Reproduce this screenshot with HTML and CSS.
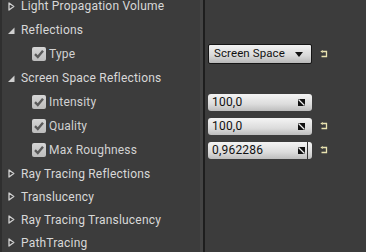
FILE: index.html
```html
<!DOCTYPE html>
<html>
<head>
<meta charset="utf-8">
<link rel="stylesheet" href="styles.css">
</head>
<body>
<div class="panel">
  <div class="row cat"><div class="name"><svg class="arrow" viewBox="0 0 7 9" width="7" height="9"><path d="M1 1 L5.8 4.5 L1 8 Z" fill="none" stroke="#d0d0d0" stroke-width="1.3" stroke-linejoin="round"/></svg>Light Propagation Volume</div><div class="val"></div></div>
  <div class="row cat"><div class="name"><svg class="arrow" viewBox="0 0 7 9" width="7" height="9"><path d="M6.5 1.5 V8 H0 Z" fill="#d0d0d0"/></svg>Reflections</div><div class="val"></div></div>
  <div class="row prop"><div class="name"><span class="check"><svg viewBox="0 0 14 14" width="14" height="14"><path d="M3 7.2 L5.8 10 L11 3.8" fill="none" stroke="#5a5a5a" stroke-width="2.4"/></svg></span>Type</div>
    <div class="val"><div class="combo"><span>Screen Space</span><svg class="drop" viewBox="0 0 8 5" width="8" height="5"><path d="M0 0 H8 L4 5 Z" fill="#111"/></svg></div><svg class="reset" viewBox="0 0 8 8" width="8" height="8"><path d="M2.5 1.5 H6.5 V6.5 H1.5" fill="none" stroke="#e8e2b0" stroke-width="1.3"/><path d="M0.3 1.5 L2.8 0 V3 Z" fill="#e8e2b0"/></svg></div></div>
  <div class="row cat"><div class="name"><svg class="arrow" viewBox="0 0 7 9" width="7" height="9"><path d="M6.5 1.5 V8 H0 Z" fill="#d0d0d0"/></svg>Screen Space Reflections</div><div class="val"></div></div>
  <div class="row prop"><div class="name"><span class="check"><svg viewBox="0 0 14 14" width="14" height="14"><path d="M3 7.2 L5.8 10 L11 3.8" fill="none" stroke="#5a5a5a" stroke-width="2.4"/></svg></span>Intensity</div>
    <div class="val"><div class="num"><span>100,0</span><svg class="grip" viewBox="0 0 7 7" width="7" height="7"><path d="M0 0 H7 V7 H0 Z" fill="#111"/><path d="M0.5 0.5 L6.5 6.5" stroke="#eee" stroke-width="1.2"/></svg></div></div></div>
  <div class="row prop"><div class="name"><span class="check"><svg viewBox="0 0 14 14" width="14" height="14"><path d="M3 7.2 L5.8 10 L11 3.8" fill="none" stroke="#5a5a5a" stroke-width="2.4"/></svg></span>Quality</div>
    <div class="val"><div class="num"><span>100,0</span><svg class="grip" viewBox="0 0 7 7" width="7" height="7"><path d="M0 0 H7 V7 H0 Z" fill="#111"/><path d="M0.5 0.5 L6.5 6.5" stroke="#eee" stroke-width="1.2"/></svg></div><svg class="reset" viewBox="0 0 8 8" width="8" height="8"><path d="M2.5 1.5 H6.5 V6.5 H1.5" fill="none" stroke="#e8e2b0" stroke-width="1.3"/><path d="M0.3 1.5 L2.8 0 V3 Z" fill="#e8e2b0"/></svg></div></div>
  <div class="row prop"><div class="name"><span class="check"><svg viewBox="0 0 14 14" width="14" height="14"><path d="M3 7.2 L5.8 10 L11 3.8" fill="none" stroke="#5a5a5a" stroke-width="2.4"/></svg></span>Max Roughness</div>
    <div class="val"><div class="num slider"><span>0,962286</span><svg class="grip" viewBox="0 0 7 7" width="7" height="7"><path d="M0 0 H7 V7 H0 Z" fill="#111"/><path d="M0.5 0.5 L6.5 6.5" stroke="#eee" stroke-width="1.2"/></svg><i class="fill"></i></div><svg class="reset" viewBox="0 0 8 8" width="8" height="8"><path d="M2.5 1.5 H6.5 V6.5 H1.5" fill="none" stroke="#e8e2b0" stroke-width="1.3"/><path d="M0.3 1.5 L2.8 0 V3 Z" fill="#e8e2b0"/></svg></div></div>
  <div class="row cat short"><div class="name"><svg class="arrow" viewBox="0 0 7 9" width="7" height="9"><path d="M1 1 L5.8 4.5 L1 8 Z" fill="none" stroke="#d0d0d0" stroke-width="1.3" stroke-linejoin="round"/></svg>Ray Tracing Reflections</div><div class="val"></div></div>
  <div class="row cat short"><div class="name"><svg class="arrow" viewBox="0 0 7 9" width="7" height="9"><path d="M1 1 L5.8 4.5 L1 8 Z" fill="none" stroke="#d0d0d0" stroke-width="1.3" stroke-linejoin="round"/></svg>Translucency</div><div class="val"></div></div>
  <div class="row cat short"><div class="name"><svg class="arrow" viewBox="0 0 7 9" width="7" height="9"><path d="M1 1 L5.8 4.5 L1 8 Z" fill="none" stroke="#d0d0d0" stroke-width="1.3" stroke-linejoin="round"/></svg>Ray Tracing Translucency</div><div class="val"></div></div>
  <div class="row cat short"><div class="name"><svg class="arrow" viewBox="0 0 7 9" width="7" height="9"><path d="M1 1 L5.8 4.5 L1 8 Z" fill="none" stroke="#d0d0d0" stroke-width="1.3" stroke-linejoin="round"/></svg>PathTracing</div><div class="val"></div></div>
</div>
</body>
</html>
```
FILE: styles.css
```css
html, body {
  margin: 0;
  padding: 0;
  background: #3c3c3c;
  overflow: hidden;
  height: 100%;
}
body {
  font-family: Roboto, "Liberation Sans", sans-serif;
  font-size: 12px;
  letter-spacing: 0.2px;
  color: #d2d2d2;
}
.panel {
  margin-top: -6px;
  border-left: 2px solid #2f2f2f;
  min-height: 280px;
  background: linear-gradient(to right, transparent 198px, #444 198px, #444 201px, #1e1e1e 201px, #1e1e1e 203px, transparent 203px);
}
.row {
  display: grid;
  grid-template-columns: 202px 1fr;
  height: 24px;
}
.row.short {
  height: 23px;
}
.name {
  display: flex;
  align-items: center;
  white-space: nowrap;
}
.val {
  display: flex;
  align-items: center;
  padding-left: 4px;
  gap: 8px;
  font-size: 12px;
  letter-spacing: 0.2px;
  white-space: nowrap;
}
.cat .name {
  padding-left: 6px;
  color: #d8d8d8;
}
.arrow {
  display: block;
  margin-right: 6px;
}
.prop .name {
  padding-left: 30px;
}
.check {
  width: 14px;
  height: 14px;
  background: linear-gradient(#d6d6d6, #bcbcbc);
  border-radius: 2px;
  margin-right: 3px;
  display: inline-flex;
}
.combo {
  width: 104px;
  height: 20px;
  border: 1px solid #151515;
  border-radius: 2px;
  background: linear-gradient(#f2f2f2, #d8d8d8 60%, #b8b8b8);
  color: #111;
  display: flex;
  align-items: center;
  justify-content: space-between;
  padding: 0 8px 0 5px;
  box-sizing: border-box;
  font-size: 11.5px;
  letter-spacing: 0.1px;
}
.num {
  width: 104px;
  height: 17px;
  border-radius: 3px;
  background: linear-gradient(#f4f4f4, #dcdcdc 60%, #bdbdbd);
  color: #111;
  display: flex;
  align-items: center;
  justify-content: space-between;
  padding: 0 7px 0 4px;
  box-sizing: border-box;
  position: relative;
}
.num span, .combo span {
  line-height: 1;
}
.fill {
  position: absolute;
  left: 99px;
  top: 0;
  bottom: 0;
  width: 1px;
  background: #333;
}
.grip, .reset, .drop {
  display: block;
  flex-shrink: 0;
}
```
